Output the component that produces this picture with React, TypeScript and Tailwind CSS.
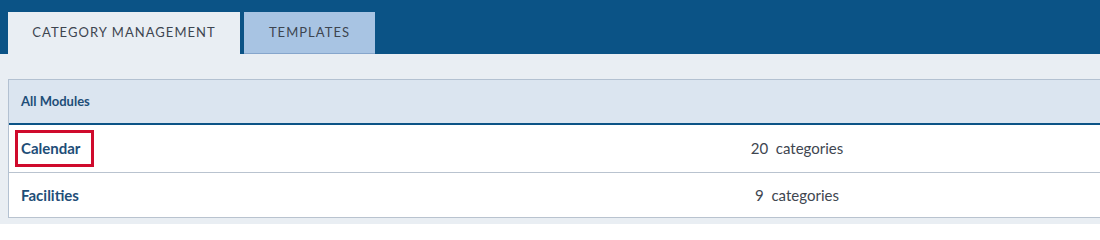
import React from 'react'

const rows = [
  { name: 'Calendar', count: 20, highlighted: true },
  { name: 'Facilities', count: 9, highlighted: false },
]

export default function App() {
  return (
    <div className="w-[1100px] h-[224px] overflow-hidden bg-[#e9eef3] font-['Lato','Open_Sans',sans-serif]">
      <div className="h-[54px] bg-[#0b5386] flex items-end pl-2 gap-1">
        <div className="h-[42px] w-[232px] bg-[#e9eef3] flex items-center justify-center text-[13px] tracking-[0.08em] text-[#3d4550]">
          CATEGORY MANAGEMENT
        </div>
        <div className="h-[42px] w-[131px] bg-[#a8c4e3] border-b border-[#86a6cc] flex items-center justify-center text-[13px] tracking-[0.08em] text-[#3d4550]">
          TEMPLATES
        </div>
      </div>

      <div className="mt-[25px] ml-2 w-[1110px] border-l border-t border-[#b3c1d1] bg-white">
        <div className="h-[45px] bg-[#dbe5f0] flex items-center px-3 text-[13px] font-bold text-[#1e4e78] border-b-2 border-[#0b5386]">
          All Modules
        </div>
        {rows.map((r) => (
          <div
            key={r.name}
            className="grid grid-cols-[486px_604px] items-center border-b border-[#b9c3cf] h-[48px] last:h-[45px]"
          >
            <div className="pl-[6px]">
              <span
                className={
                  r.highlighted
                    ? 'inline-block border-[3px] border-[#cf0a2c] pl-[3px] pr-[11px] py-[4px] text-[15px] font-bold text-[#1e4e78]'
                    : 'inline-block border-[3px] border-transparent pl-[3px] pr-[11px] py-[4px] text-[15px] font-bold text-[#1e4e78]'
                }
              >
                {r.name}
              </span>
            </div>
            <div className="text-center text-[15px] text-[#404650]">
              {r.count}&nbsp; categories
            </div>
          </div>
        ))}
      </div>
    </div>
  )
}
